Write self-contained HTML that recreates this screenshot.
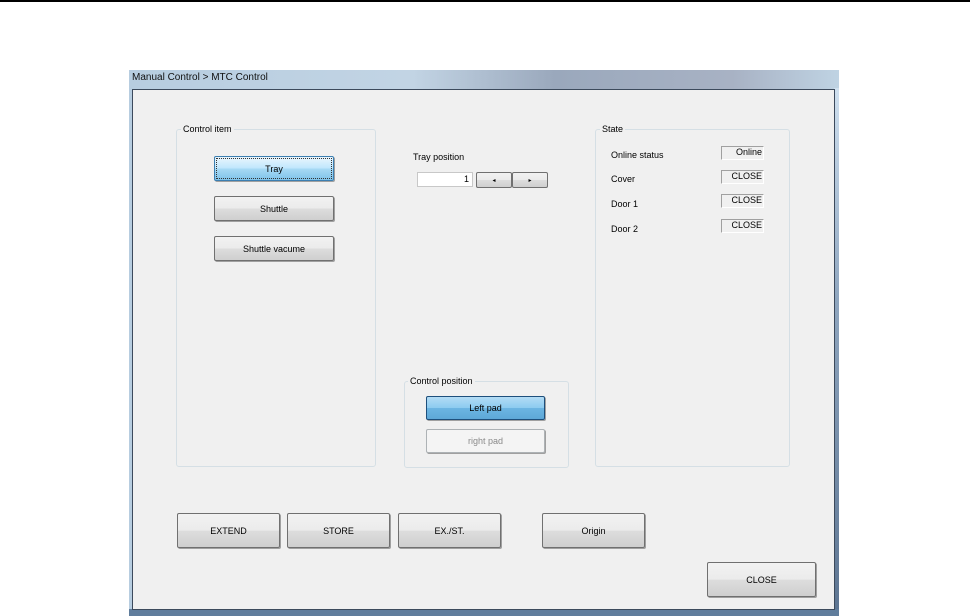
<!DOCTYPE html>
<html><head><style>
body{margin:0;width:970px;height:616px;background:#fff;position:relative;overflow:hidden;font-family:"Liberation Sans",sans-serif;font-size:9px;color:#000}
.a{position:absolute;box-sizing:border-box}
.btn{position:absolute;box-sizing:border-box;border:1px solid #707070;border-radius:2px;background:linear-gradient(#f2f2f2 0%,#ebebeb 50%,#dddddd 51%,#cfcfcf 100%);display:flex;align-items:center;justify-content:center;box-shadow:1px 1px 0 #a0a0a0}
.blue{background:linear-gradient(#eaf6fd 0%,#bee6fd 50%,#a7d9f5 51%,#7fc3ea 100%);border-color:#3c7fb1}
.grp{position:absolute;box-sizing:border-box;border:1px solid #d5dfe5;border-radius:3px}
.gl{position:absolute;background:#f0f0f0;padding:0 2px;top:-6px;left:4px}
.box{position:absolute;box-sizing:border-box;border:1px solid #a0a0a0;border-right-color:#fff;border-bottom-color:#fff;text-align:right;padding-right:1px;line-height:11px;height:14px;width:43px}
</style></head><body>
<div class="a" style="left:0;top:0;width:970px;height:2px;background:#000"></div>
<div class="a" style="left:129px;top:70px;width:710px;height:546px;background:linear-gradient(90deg,#b7cde0,#c2d4e4 40%,#9aa8bc 60%,#a8b2c4 85%,#bfd3e3)"></div>
<div class="a" style="left:834px;top:88px;width:5px;height:528px;background:linear-gradient(#cfe0ef,#8fa6bf 40%,#5c7491)"></div>
<div class="a" style="left:129px;top:609px;width:710px;height:7px;background:#607d9c"></div>
<div class="a" style="left:132px;top:72px;font-size:10px;color:#111">Manual Control &gt; MTC Control</div>
<div class="a" style="left:132px;top:89px;width:703px;height:521px;background:#f0f0f0;border:1px solid #3c4a5c"></div>

<div class="grp" style="left:176px;top:129px;width:200px;height:338px"><span class="gl">Control item</span></div>
<div class="btn blue" style="left:214px;top:156px;width:120px;height:25px;outline:1px dotted #333;outline-offset:-3px">Tray</div>
<div class="btn" style="left:214px;top:196px;width:120px;height:25px">Shuttle</div>
<div class="btn" style="left:214px;top:236px;width:120px;height:25px">Shuttle vacume</div>

<div class="a" style="left:413px;top:152px">Tray position</div>
<div class="a" style="left:417px;top:172px;width:56px;height:15px;background:#fff;border:1px solid #c8c8c8;text-align:right;padding-right:3px;line-height:13px">1</div>
<div class="btn" style="left:476px;top:172px;width:36px;height:16px;font-size:6px;box-shadow:none">◂</div>
<div class="btn" style="left:512px;top:172px;width:36px;height:16px;font-size:6px;box-shadow:none">▸</div>

<div class="grp" style="left:404px;top:381px;width:165px;height:87px"><span class="gl" style="left:3px">Control position</span></div>
<div class="btn blue" style="left:426px;top:396px;width:119px;height:24px;background:linear-gradient(#b3dcf5,#8ccbf0 50%,#6cb5e2 51%,#5ea8d8);border-color:#1e4f7c">Left pad</div>
<div class="btn" style="left:426px;top:429px;width:119px;height:24px;color:#8a8a8a;background:#f4f4f4;border-color:#adb2b5">right pad</div>

<div class="grp" style="left:595px;top:129px;width:195px;height:338px"><span class="gl">State</span></div>
<div class="a" style="left:611px;top:150px">Online status</div>
<div class="a" style="left:611px;top:174px">Cover</div>
<div class="a" style="left:611px;top:199px">Door 1</div>
<div class="a" style="left:611px;top:224px">Door 2</div>
<div class="box" style="left:721px;top:146px">Online</div>
<div class="box" style="left:721px;top:170px">CLOSE</div>
<div class="box" style="left:721px;top:194px">CLOSE</div>
<div class="box" style="left:721px;top:219px">CLOSE</div>

<div class="btn" style="left:177px;top:513px;width:103px;height:35px">EXTEND</div>
<div class="btn" style="left:287px;top:513px;width:103px;height:35px">STORE</div>
<div class="btn" style="left:398px;top:513px;width:103px;height:35px">EX./ST.</div>
<div class="btn" style="left:542px;top:513px;width:103px;height:35px">Origin</div>
<div class="btn" style="left:707px;top:562px;width:109px;height:35px">CLOSE</div>
</body></html>
